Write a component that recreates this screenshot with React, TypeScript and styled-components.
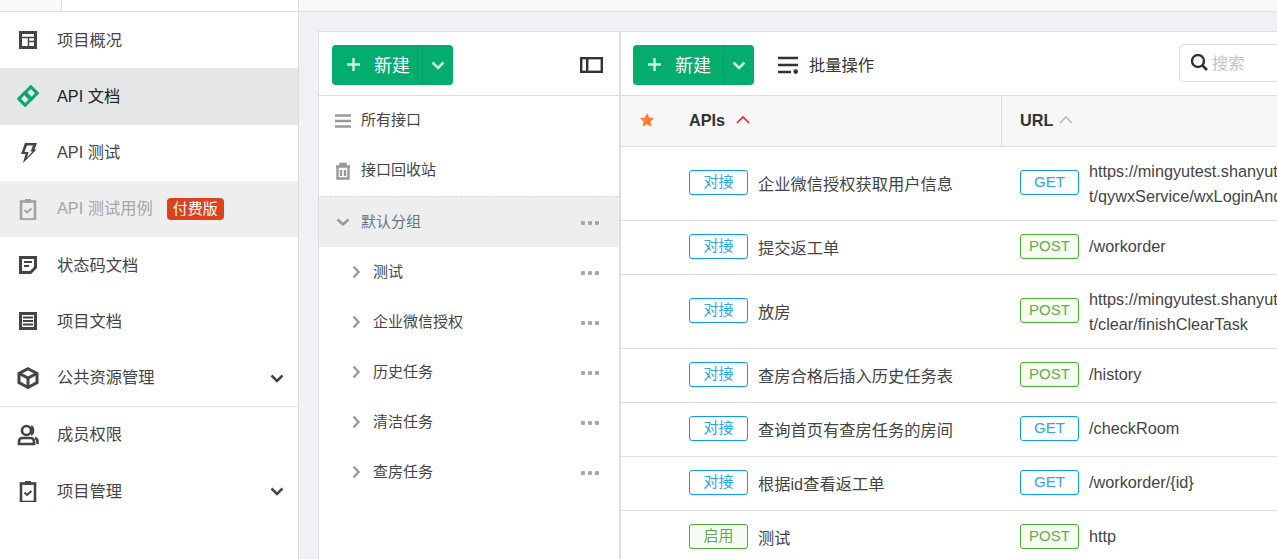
import styled, { createGlobalStyle } from 'styled-components';

const FONT = `"Liberation Sans", "Noto Sans CJK SC", sans-serif`;

const GlobalStyle = createGlobalStyle`
	html, body {
		margin: 0;
		height: 559px;
		overflow: hidden;
		background: #f0f1f5;
		font-family: ${FONT};
	}
	* {
		box-sizing: border-box;
	}
`;

const Page = styled.div`
	display: flex;
	width: 1277px;
	height: 559px;
	overflow: hidden;
`;

const Sidebar = styled.aside`
	flex: 0 0 299px;
	height: 100%;
	background: #fff;
	border-right: 1px solid #dcdcdc;
`;

const SideTop = styled.div`
	height: 12px;
	border-bottom: 1px solid #dedede;
	display: flex;
`;

const SideTab = styled.div`
	width: 62px;
	background: #fafafa;
	border-right: 1px solid #dedede;
`;

const SideItem = styled.div<{ $state?: 'active' | 'locked'; $divider?: boolean }>`
	height: ${(p) => (p.$divider ? '57.25px' : '56.25px')};
	display: flex;
	align-items: center;
	padding-left: 17px;
	padding-right: 13px;
	font-size: 16.25px;
	color: ${(p) => (p.$state === 'active' ? '#222' : p.$state === 'locked' ? '#a5a5a5' : '#444')};
	background: ${(p) => (p.$state === 'active' ? '#e5e6e8' : p.$state === 'locked' ? '#eeeeee' : 'transparent')};
	border-bottom: ${(p) => (p.$divider ? '1px solid #e2e2e2' : 'none')};
`;

const SideIcon = styled.svg`
	width: 22px;
	height: 22px;
	flex: none;
	margin-right: 18px;
`;

const SideLabel = styled.span`
	flex: 1;
	display: flex;
	align-items: center;
	padding-bottom: 3px;
`;

const PaidBadge = styled.span`
	margin: 3px 0 0 14px;
	width: 57px;
	height: 22px;
	line-height: 21px;
	text-align: center;
	border-radius: 4px;
	background: #dc431c;
	color: #fff;
	font-size: 15px;
`;

const Chevron = styled.svg`
	width: 16px;
	height: 16px;
	flex: none;
`;

const Main = styled.main`
	flex: 1;
	min-width: 0;
	display: flex;
	flex-direction: column;
`;

const TopStrip = styled.div`
	height: 12px;
	flex: none;
	background: #f7f8fa;
	border-bottom: 1px solid #dedede;
`;

const Content = styled.div`
	flex: 1;
	display: flex;
	padding: 19px 0 0 19px;
	min-height: 0;
`;

const TreePanel = styled.section`
	flex: 0 0 303px;
	background: #fff;
	border: 1px solid #dedede;
	border-bottom: none;
	border-right-width: 2px;
`;

const ApiPanel = styled.section`
	flex: 1;
	min-width: 0;
	background: #fff;
	border-top: 1px solid #dedede;
	overflow: hidden;
`;

const Toolbar = styled.div`
	height: 64px;
	display: flex;
	align-items: center;
	padding-top: 3px;
	border-bottom: 1px solid #dcdcdc;
`;

const TreeToolbar = styled(Toolbar)`
	padding-left: 13px;
	padding-right: 16px;
	justify-content: space-between;
`;

const ApiToolbar = styled(Toolbar)`
	padding-left: 12px;
`;

const SplitButton = styled.div`
	width: 121px;
	height: 40px;
	display: flex;
	border-radius: 4px;
	background: #02ad6e;
	color: #fff;
	font-size: 18px;
`;

const SplitMain = styled.div`
	width: 91px;
	display: flex;
	align-items: center;
	padding: 0 0 2px 15px;
	gap: 14px;
	border-right: 1px solid #019a61;
`;

const SplitCaret = styled.div`
	flex: 1;
	display: flex;
	align-items: center;
	justify-content: center;
`;

const BatchAction = styled.div`
	display: flex;
	align-items: center;
	gap: 11px;
	margin-left: 24px;
	font-size: 16.25px;
	color: #333;
`;

const BatchLabel = styled.span`
	padding-bottom: 3px;
`;

const SearchBox = styled.div`
	margin: 0 -42px 4px auto;
	width: 140px;
	height: 38px;
	display: flex;
	align-items: center;
	gap: 3px;
	padding-left: 11px;
	border: 1px solid #dedede;
	border-radius: 5px;
	font-size: 16.25px;
	color: #c4c4c4;
`;

const SearchLabel = styled.span`
	padding-bottom: 3px;
`;

const TreeRow = styled.div<{ $level?: number; $selected?: boolean; $dashed?: boolean }>`
	height: ${(p) => (p.$dashed ? 51 : 50)}px;
	display: flex;
	align-items: center;
	padding-left: ${(p) => (p.$level ? 28 : 15)}px;
	padding-right: 20px;
	font-size: 15px;
	color: ${(p) => (p.$selected ? '#67747f' : '#444')};
	background: ${(p) => (p.$selected ? '#eeeeee' : 'transparent')};
	border-top: ${(p) => (p.$dashed ? '1px dashed #dcdcdc' : 'none')};
`;

const TreeIcon = styled.svg<{ $small?: boolean }>`
	width: 18px;
	height: 18px;
	flex: none;
	margin-right: ${(p) => (p.$small ? 8 : 9)}px;
`;

const TreeLabel = styled.span<{ $raised?: boolean }>`
	flex: 1;
	padding-bottom: ${(p) => (p.$raised ? 5 : 3)}px;
`;

const MoreDots = styled.span`
	display: flex;
	gap: 3px;
	margin-top: 2px;
	& > i {
		width: 4px;
		height: 4px;
		border-radius: 1px;
		background: #a6a6a6;
	}
`;

const TableHead = styled.div`
	height: 51px;
	display: grid;
	grid-template-columns: 380px 1fr;
	background: #f7f7f7;
	border-bottom: 1px solid #dcdcdc;
	font-size: 16.25px;
	font-weight: 700;
	color: #333;
`;

const HeadCell = styled.div<{ $split?: boolean }>`
	display: flex;
	align-items: center;
	padding-left: 18px;
	padding-bottom: 2px;
	gap: ${(p) => (p.$split ? 5 : 10)}px;
	border-left: ${(p) => (p.$split ? '1px solid #dcdcdc' : 'none')};
`;

const StarIcon = styled.svg`
	width: 16px;
	height: 16px;
	margin-right: 24px;
	flex: none;
`;

const SortIcon = styled.svg`
	width: 16px;
	height: 16px;
	flex: none;
`;

const ApiRow = styled.div<{ $tall?: boolean }>`
	height: ${(p) => (p.$tall ? 74 : 54)}px;
	display: grid;
	grid-template-columns: 380px 1fr;
	align-items: center;
	padding-bottom: 2px;
	border-bottom: 1px solid #dedede;
	font-size: 16.25px;
	color: #444;
`;

const NameCell = styled.div`
	display: flex;
	align-items: center;
	padding-left: 68px;
	gap: 10px;
`;

const UrlCell = styled.div`
	display: flex;
	align-items: center;
	padding-left: 19px;
	gap: 10px;
`;

const UrlText = styled.div<{ $multi?: boolean }>`
	line-height: 25px;
	white-space: pre;
	margin-top: ${(p) => (p.$multi ? 2 : 0)}px;
`;

const TONES = {
	blue: { border: '#0c9fe8', color: '#2ea3f2', bg: '#fff' },
	green: { border: '#4fae30', color: '#63ad47', bg: '#f6fdf3' },
};

const Tag = styled.span<{ $tone: keyof typeof TONES }>`
	width: 59px;
	height: 25px;
	line-height: 22px;
	flex: none;
	text-align: center;
	font-size: 15px;
	border-radius: 3px;
	border: 1px solid ${(p) => TONES[p.$tone].border};
	color: ${(p) => TONES[p.$tone].color};
	background: ${(p) => TONES[p.$tone].bg};
`;

const Down = ({ color = '#444' }: { color?: string }) => (
	<Chevron viewBox="0 0 16 16">
		<path d="M2.5 5.5 8 11l5.5-5.5" fill="none" stroke={color} strokeWidth="2.5" />
	</Chevron>
);

const NewButton = () => (
	<SplitButton>
		<SplitMain>
			<svg width="13" height="13" viewBox="0 0 13 13">
				<path d="M6.5 0v13M0 6.5h13" stroke="#cdf1e2" strokeWidth="2.4" />
			</svg>
			新建
		</SplitMain>
		<SplitCaret>
			<Down color="#cdf1e2" />
		</SplitCaret>
	</SplitButton>
);

const ICONS: Record<string, React.ReactNode> = {
	overview: (
		<g fill="none" stroke="#444">
			<rect x="3.5" y="3.5" width="15" height="15" strokeWidth="3" />
			<path d="M5 8.5h12M11.5 8.5V17M11.5 12.5H17" strokeWidth="1.5" />
		</g>
	),
	link: (
		<g fill="none" stroke="#0aa56d" strokeWidth="3" transform="rotate(-45 11 11)">
			<rect x="2.5" y="6.5" width="9" height="9" />
			<rect x="10.5" y="6.5" width="9" height="9" />
		</g>
	),
	bolt: (
		<path d="M8 1h12l-2.5 6.5h2L6 21l2.5-9H4z M10 3.5 7.500 10h4L10 15.500l5.500-6h-2L16 3.500z" fill="#444" fillRule="evenodd" />
	),
	caseLocked: (
		<g fill="none" stroke="#a3a3a3">
			<rect x="4" y="3.5" width="14" height="18" strokeWidth="2.6" />
			<rect x="8" y="1" width="6" height="4" fill="#a3a3a3" stroke="none" />
			<path d="m7.5 12 2.5 2.5 4.5-4" strokeWidth="2" />
		</g>
	),
	note: (
		<g fill="none" stroke="#444">
			<path d="M3.5 3.5h15v10l-5 5h-10z" strokeWidth="3" />
			<path d="M7 8h8M7 12h5" strokeWidth="2" />
		</g>
	),
	doc: (
		<g fill="none" stroke="#444">
			<rect x="3.5" y="3.5" width="15" height="15" strokeWidth="3" />
			<path d="M6 7.5h10M6 11h10M6 14.5h10" strokeWidth="2" />
		</g>
	),
	box: (
		<g fill="none" stroke="#444" strokeWidth="3">
			<path d="M11 1.7 20 6.5v9l-9 5-9-5v-9z" />
			<path d="M2.5 6.5 11 11l8.5-4.500M11 11v9" />
		</g>
	),
	members: (
		<g fill="none" stroke="#444" strokeWidth="2.6">
			<circle cx="9.5" cy="6.5" r="4.5" />
			<path d="M14 2.5c2.6 1 2.6 7 0 8" />
			<path d="M2 20v-2.5c0-2 1.5-3.5 3.5-3.5h8c2 0 3.5 1.5 3.5 3.5V20z" />
			<path d="M18 14c1.5.5 2.5 2 2.5 3.5V20" />
		</g>
	),
	manage: (
		<g fill="none" stroke="#444">
			<rect x="4" y="3.5" width="14" height="18.5" strokeWidth="2.6" />
			<rect x="8" y="1" width="6" height="4" fill="#444" stroke="none" />
			<path d="m7.5 12.500 2.500 2.500 4.500-4" strokeWidth="2" />
		</g>
	),
};

const SIDE_ITEMS: { icon: string; label: string; state?: 'active' | 'locked'; paid?: boolean; expand?: boolean; divider?: boolean }[] = [
	{ icon: 'overview', label: '项目概况' },
	{ icon: 'link', label: 'API 文档', state: 'active' },
	{ icon: 'bolt', label: 'API 测试' },
	{ icon: 'caseLocked', label: 'API 测试用例', state: 'locked', paid: true },
	{ icon: 'note', label: '状态码文档' },
	{ icon: 'doc', label: '项目文档' },
	{ icon: 'box', label: '公共资源管理', expand: true, divider: true },
	{ icon: 'members', label: '成员权限' },
	{ icon: 'manage', label: '项目管理', expand: true },
];

const GROUPS = ['测试', '企业微信授权', '历史任务', '清洁任务', '查房任务'];

const APIS: { status: string; statusTone: 'blue' | 'green'; name: string; method: string; url: string }[] = [
	{ status: '对接', statusTone: 'blue', name: '企业微信授权获取用户信息', method: 'GET', url: 'https://mingyutest.shanyutech.com/mingyu-hotel-res\nt/qywxService/wxLoginAndGetUserInfo' },
	{ status: '对接', statusTone: 'blue', name: '提交返工单', method: 'POST', url: '/workorder' },
	{ status: '对接', statusTone: 'blue', name: '放房', method: 'POST', url: 'https://mingyutest.shanyutech.com/mingyu-hotel-res\nt/clear/finishClearTask' },
	{ status: '对接', statusTone: 'blue', name: '查房合格后插入历史任务表', method: 'POST', url: '/history' },
	{ status: '对接', statusTone: 'blue', name: '查询首页有查房任务的房间', method: 'GET', url: '/checkRoom' },
	{ status: '对接', statusTone: 'blue', name: '根据id查看返工单', method: 'GET', url: '/workorder/{id}' },
	{ status: '启用', statusTone: 'green', name: '测试', method: 'POST', url: 'http' },
];

const Dots = () => (
	<MoreDots>
		<i />
		<i />
		<i />
	</MoreDots>
);

export default function App() {
	return (
		<Page>
			<GlobalStyle />
			<Sidebar>
				<SideTop>
					<SideTab />
				</SideTop>
				{SIDE_ITEMS.map((item) => (
					<SideItem key={item.label} $state={item.state} $divider={item.divider}>
						<SideIcon viewBox="0 0 22 22">{ICONS[item.icon]}</SideIcon>
						<SideLabel>
							{item.label}
							{item.paid && <PaidBadge>付费版</PaidBadge>}
						</SideLabel>
						{item.expand && <Down />}
					</SideItem>
				))}
			</Sidebar>
			<Main>
				<TopStrip />
				<Content>
					<TreePanel>
						<TreeToolbar>
							<NewButton />
							<svg width="23" height="16" viewBox="0 0 23 16">
								<rect x="1.2" y="1.2" width="20.6" height="13.6" fill="#fff" stroke="#333" strokeWidth="2.4" />
								<rect x="6" y="1" width="2.4" height="14" fill="#333" />
							</svg>
						</TreeToolbar>
						<TreeRow>
							<TreeIcon viewBox="0 0 18 18">
								<path d="M1 3.5h16M1 9h16M1 14.5h16" stroke="#999" strokeWidth="2.5" />
							</TreeIcon>
							<TreeLabel $raised>所有接口</TreeLabel>
						</TreeRow>
						<TreeRow>
							<TreeIcon viewBox="0 0 18 18">
								<path d="M2 4.5h14M6.5 4V2h5v2M3.5 5v11.5h11V5M7 8v6M11 8v6" fill="none" stroke="#999" strokeWidth="2.4" />
							</TreeIcon>
							<TreeLabel $raised>接口回收站</TreeLabel>
						</TreeRow>
						<TreeRow $selected $dashed>
							<TreeIcon viewBox="0 0 18 18">
								<path d="m3.5 6.5 5.5 5 5.500-5" fill="none" stroke="#999" strokeWidth="2.4" />
							</TreeIcon>
							<TreeLabel>默认分组</TreeLabel>
							<Dots />
						</TreeRow>
						{GROUPS.map((group) => (
							<TreeRow key={group} $level={1}>
								<TreeIcon $small viewBox="0 0 18 18">
									<path d="m6.5 3.5 5 5.5-5 5.5" fill="none" stroke="#999" strokeWidth="2.4" />
								</TreeIcon>
								<TreeLabel>{group}</TreeLabel>
								<Dots />
							</TreeRow>
						))}
					</TreePanel>
					<ApiPanel>
						<ApiToolbar>
							<NewButton />
							<BatchAction>
								<svg width="20" height="18" viewBox="0 0 20 18">
									<path d="M0 2h20M0 9h20M0 16h13" stroke="#333" strokeWidth="2.5" />
									<circle cx="17.7" cy="15.6" r="2.3" fill="#333" />
								</svg>
								<BatchLabel>批量操作</BatchLabel>
							</BatchAction>
							<SearchBox>
								<svg width="18" height="18" viewBox="0 0 18 18">
									<circle cx="7" cy="7" r="6" fill="none" stroke="#333" strokeWidth="2.4" />
									<path d="m11.5 11.5 4.5 4.5" stroke="#333" strokeWidth="2.6" />
								</svg>
								<SearchLabel>搜索</SearchLabel>
							</SearchBox>
						</ApiToolbar>
						<TableHead>
							<HeadCell>
								<StarIcon viewBox="0 0 16 16">
									<path d="m8 1 2.200 4.500 4.800.7-3.500 3.400.8 4.900L8 12.200l-4.300 2.300.8-4.900L1 6.200l4.800-.7z" fill="#ff7f2e" />
								</StarIcon>
								APIs
								<SortIcon viewBox="0 0 16 16">
									<path d="m2 11 6-6 6 6" fill="none" stroke="#f5222d" strokeWidth="1.6" />
								</SortIcon>
							</HeadCell>
							<HeadCell $split>
								URL
								<SortIcon viewBox="0 0 16 16">
									<path d="m2 11 6-6 6 6" fill="none" stroke="#bbb" strokeWidth="1.6" />
								</SortIcon>
							</HeadCell>
						</TableHead>
						{APIS.map((api) => (
							<ApiRow key={api.name} $tall={api.url.includes('\n')}>
								<NameCell>
									<Tag $tone={api.statusTone}>{api.status}</Tag>
									<span>{api.name}</span>
								</NameCell>
								<UrlCell>
									<Tag $tone={api.method === 'GET' ? 'blue' : 'green'}>{api.method}</Tag>
									<UrlText $multi={api.url.includes('\n')}>{api.url}</UrlText>
								</UrlCell>
							</ApiRow>
						))}
					</ApiPanel>
				</Content>
			</Main>
		</Page>
	);
}
